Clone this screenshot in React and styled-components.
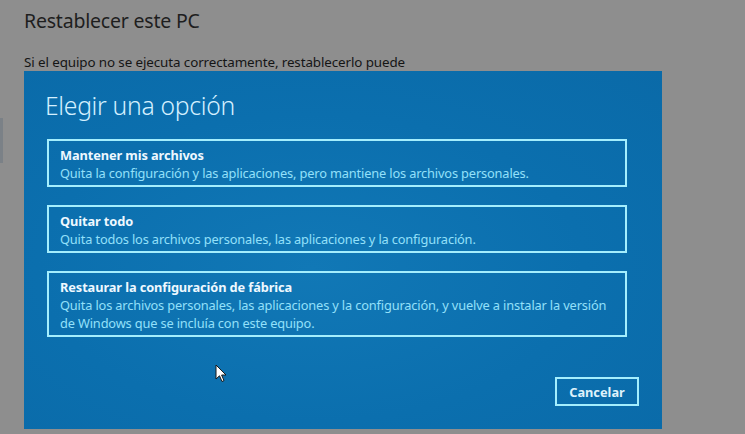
import React from "react";
import styled, { createGlobalStyle } from "styled-components";

const Global = createGlobalStyle`
  html, body { margin: 0; padding: 0; background: #8e8e8e; }
  body { font-family: "Noto Sans", "Open Sans", sans-serif; }
  * { box-sizing: border-box; }
`;

const Page = styled.div`
  width: 745px;
  height: 434px;
  overflow: hidden;
  background: #8e8e8e;
  display: grid;
  grid-template-columns: 24px 1fr;
  position: relative;
`;

const Sidebar = styled.div`
  padding-top: 118px;
`;

const Indicator = styled.div`
  width: 3px;
  height: 45px;
  background: #7b8187;
`;

const Content = styled.div`
  display: flex;
  flex-direction: column;
  padding-top: 6px;
`;

const Title = styled.h1`
  margin: 0;
  font-weight: 400;
  font-size: 19.5px;
  line-height: 30px;
  color: #1e1e1e;
  letter-spacing: -0.2px;
`;

const Subtitle = styled.p`
  margin: 17px 0 0;
  font-size: 13.4px;
  line-height: 18px;
  color: #151515;
  letter-spacing: -0.1px;
`;

const Dialog = styled.section`
  width: 638px;
  height: 358px;
  background: radial-gradient(ellipse at 45% 55%, #1178b6 0%, #0b6fae 55%, #0a6aa8 100%);
  padding: 18px 23px 23px 21px;
  display: flex;
  flex-direction: column;
`;

const Heading = styled.h2`
  margin: 0 0 16px;
  font-weight: 300;
  font-size: 24.7px;
  line-height: 34px;
  color: #d4f0ff;
  letter-spacing: -0.3px;
`;

const Options = styled.div`
  display: flex;
  flex-direction: column;
  gap: 18px;
  margin-left: 2px;
  margin-right: 12px;
`;

const Option = styled.button`
  display: block;
  width: 100%;
  text-align: left;
  background: transparent;
  border: 2px solid #a4eefd;
  padding: 5px 11px 3px;
  font-family: inherit;
  cursor: pointer;
`;

const OptionTitle = styled.div`
  font-weight: 700;
  font-size: 12.8px;
  line-height: 18px;
  color: #eef8ff;
  letter-spacing: -0.1px;
`;

const OptionDesc = styled.div`
  font-weight: 400;
  font-size: 12.8px;
  line-height: 18px;
  color: #93e0fa;
  letter-spacing: -0.15px;
`;

const Footer = styled.div`
  margin-top: auto;
  display: flex;
  justify-content: flex-end;
`;

const CancelButton = styled.button`
  width: 84px;
  height: 29px;
  background: transparent;
  border: 2px solid #a4eefd;
  color: #dff2fb;
  font-family: inherit;
  font-weight: 700;
  font-size: 12.8px;
  cursor: pointer;
`;

const Cursor = styled.svg`
  position: absolute;
  left: 215px;
  top: 364px;
`;

const options = [
  {
    title: "Mantener mis archivos",
    desc: ["Quita la configuración y las aplicaciones, pero mantiene los archivos personales."],
  },
  {
    title: "Quitar todo",
    desc: ["Quita todos los archivos personales, las aplicaciones y la configuración."],
  },
  {
    title: "Restaurar la configuración de fábrica",
    desc: [
      "Quita los archivos personales, las aplicaciones y la configuración, y vuelve a instalar la versión",
      "de Windows que se incluía con este equipo.",
    ],
  },
];

export default function App() {
  return (
    <>
      <Global />
      <Page>
        <Sidebar>
          <Indicator />
        </Sidebar>
        <Content>
          <Title>Restablecer este PC</Title>
          <Subtitle>Si el equipo no se ejecuta correctamente, restablecerlo puede</Subtitle>
          <Dialog>
            <Heading>Elegir una opción</Heading>
            <Options>
              {options.map((o) => (
                <Option key={o.title}>
                  <OptionTitle>{o.title}</OptionTitle>
                  {o.desc.map((d) => (
                    <OptionDesc key={d}>{d}</OptionDesc>
                  ))}
                </Option>
              ))}
            </Options>
            <Footer>
              <CancelButton>Cancelar</CancelButton>
            </Footer>
          </Dialog>
        </Content>
        <Cursor width="12" height="19" viewBox="0 0 12 19">
          <path d="M1 1 L1 15 L4.5 11.8 L7 17.5 L9 16.6 L6.6 11 L11 11 Z" fill="#ffffff" stroke="#1a1a1a" strokeWidth="1" strokeLinejoin="round" />
        </Cursor>
      </Page>
    </>
  );
}
